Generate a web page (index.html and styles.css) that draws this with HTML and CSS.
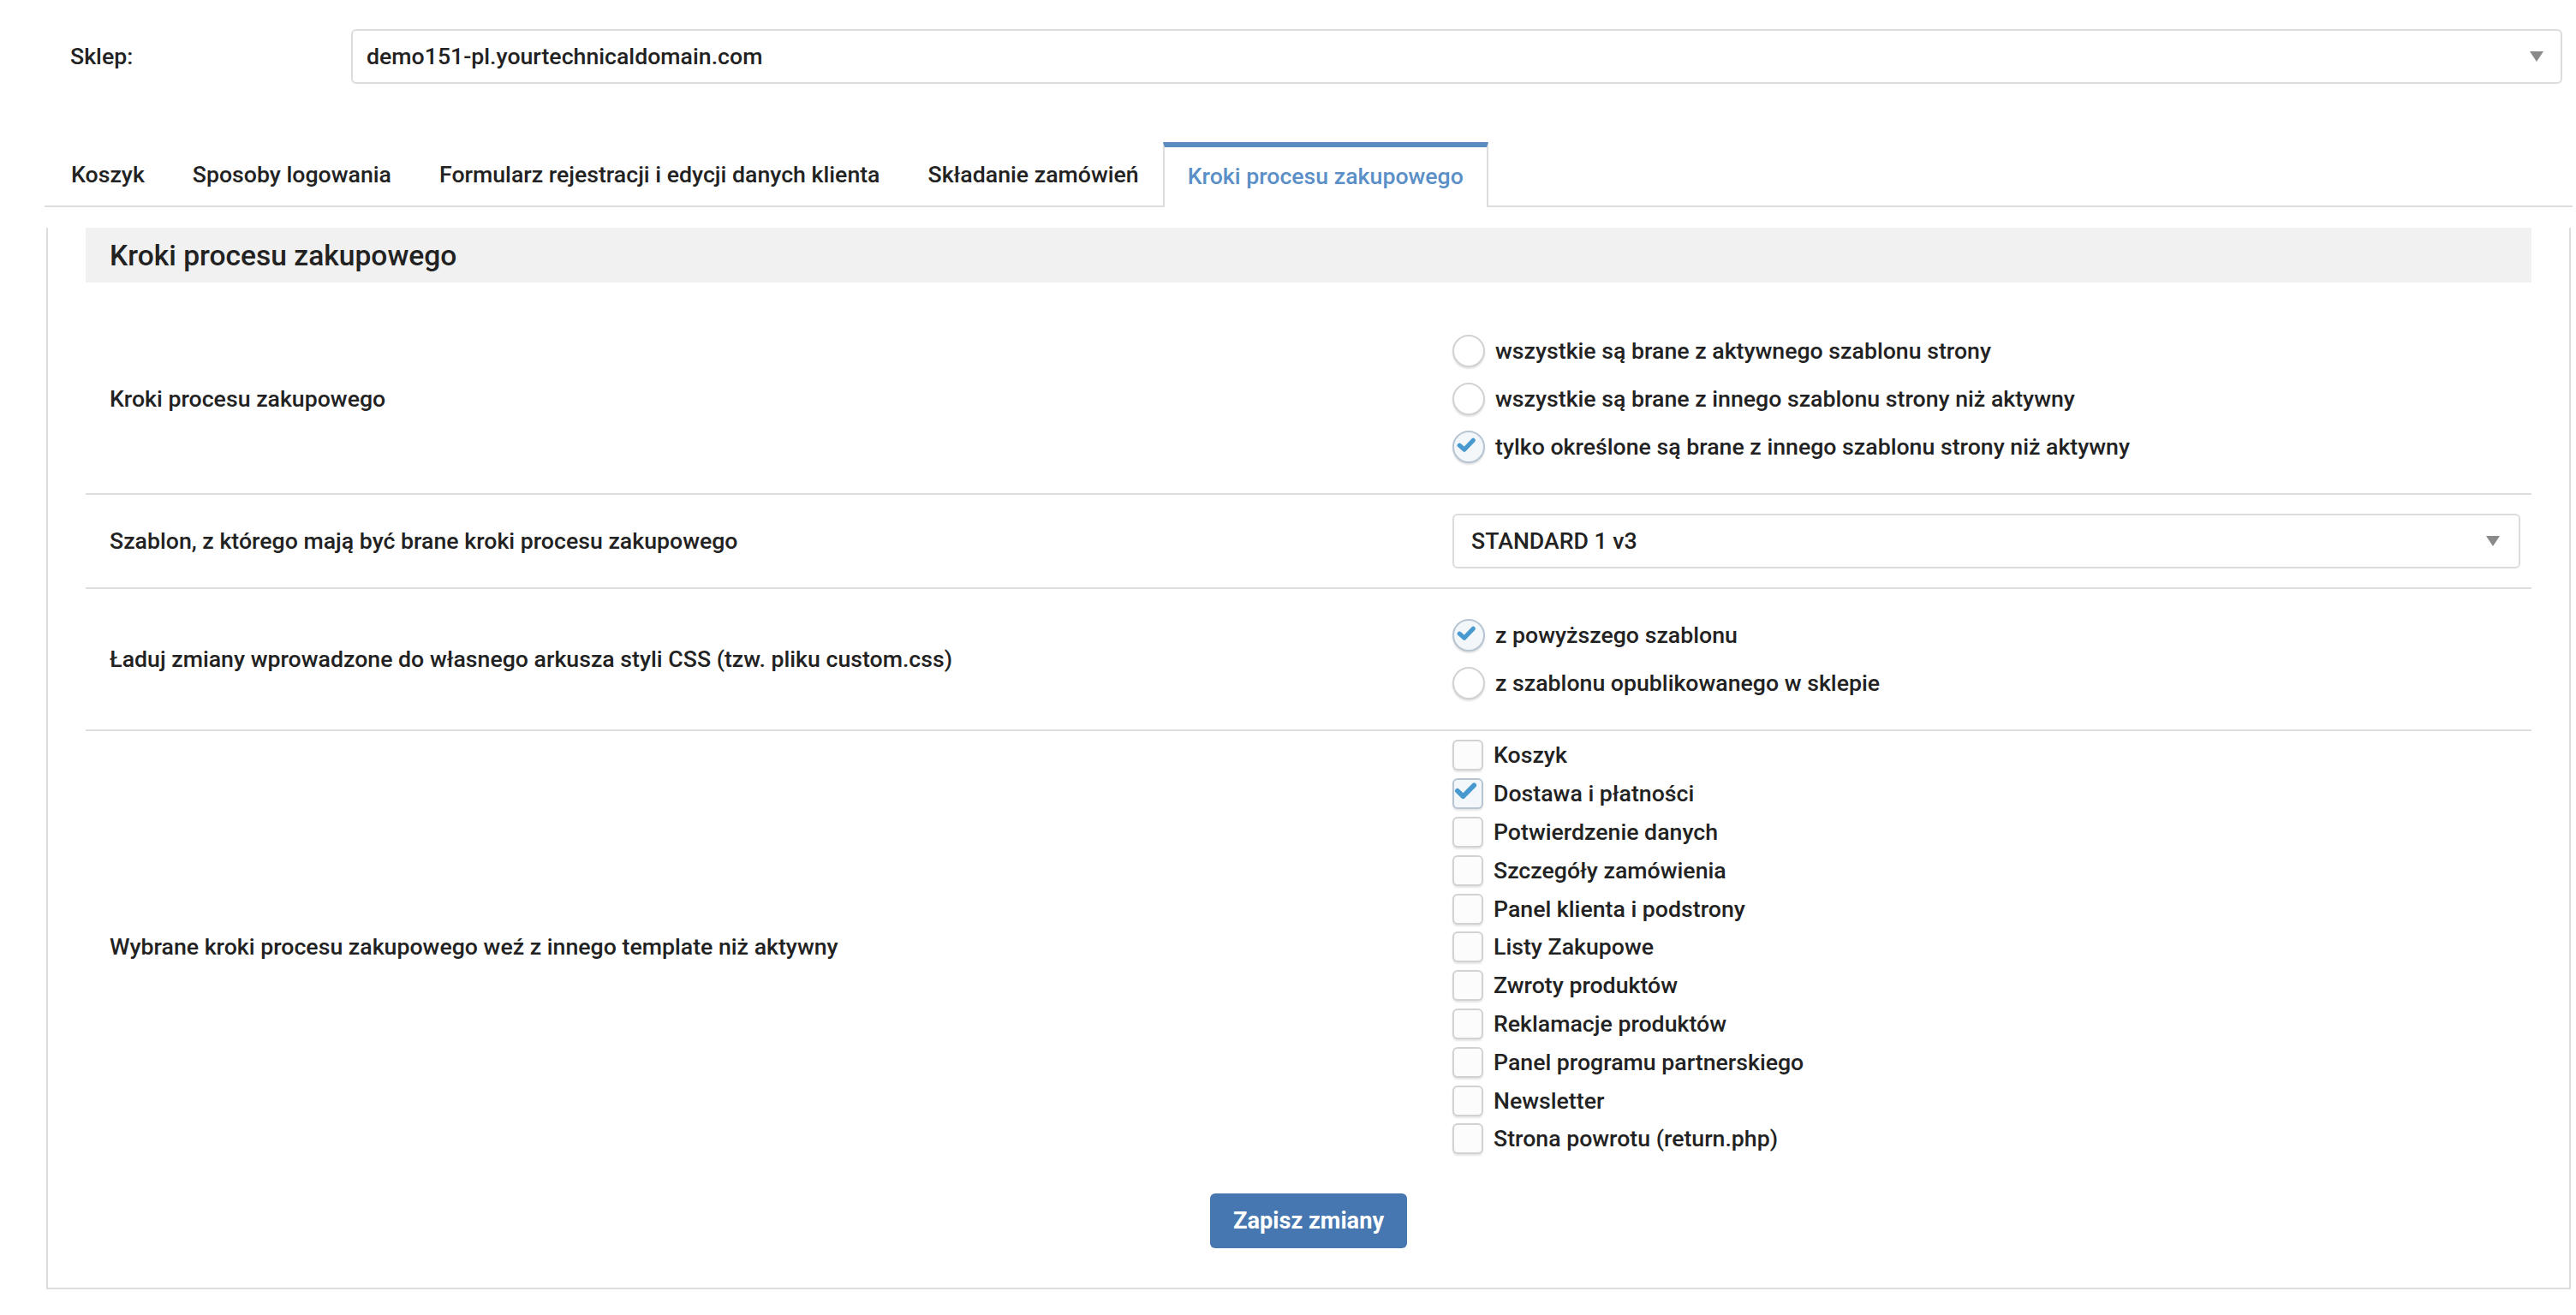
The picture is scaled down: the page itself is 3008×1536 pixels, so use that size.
FILE: index.html
```html
<!DOCTYPE html>
<html lang="pl">
<head>
    <meta charset="UTF-8">
    <meta name="viewport" content="width=device-width, initial-scale=1.0">
    <title>Kroki procesu zakupowego</title>
    <link rel="stylesheet" href="styles.css">
</head>
<body>
    <div class="page">
        <div class="shop-row">
            <label class="shop-label">Sklep:</label>
            <div class="select">
                <span>demo151-pl.yourtechnicaldomain.com</span>
                <i class="caret"></i>
            </div>
        </div>

        <ul class="tabs">
            <li>Koszyk</li>
            <li>Sposoby logowania</li>
            <li>Formularz rejestracji i edycji danych klienta</li>
            <li>Składanie zamówień</li>
            <li class="active">Kroki procesu zakupowego</li>
        </ul>

        <div class="panel">
            <h2 class="panel-title">Kroki procesu zakupowego</h2>

            <div class="row row-options">
                <div class="row-label">Kroki procesu zakupowego</div>
                <div class="row-value">
                    <div class="option"><span class="radio"></span>wszystkie są brane z aktywnego szablonu strony</div>
                    <div class="option"><span class="radio"></span>wszystkie są brane z innego szablonu strony niż aktywny</div>
                    <div class="option"><span class="radio checked"><svg viewBox="0 0 19 19"><path d="M4.6 9.6 L7.7 12.4 L13.6 6.3"/></svg></span>tylko określone są brane z innego szablonu strony niż aktywny</div>
                </div>
            </div>

            <div class="row row-select">
                <div class="row-label">Szablon, z którego mają być brane kroki procesu zakupowego</div>
                <div class="row-value">
                    <div class="select select-small">
                        <span>STANDARD 1 v3</span>
                        <i class="caret"></i>
                    </div>
                </div>
            </div>

            <div class="row row-options">
                <div class="row-label">Ładuj zmiany wprowadzone do własnego arkusza styli CSS (tzw. pliku custom.css)</div>
                <div class="row-value">
                    <div class="option"><span class="radio checked"><svg viewBox="0 0 19 19"><path d="M4.6 9.6 L7.7 12.4 L13.6 6.3"/></svg></span>z powyższego szablonu</div>
                    <div class="option"><span class="radio"></span>z szablonu opublikowanego w sklepie</div>
                </div>
            </div>

            <div class="row row-checks">
                <div class="row-label">Wybrane kroki procesu zakupowego weź z innego template niż aktywny</div>
                <div class="row-value">
                    <div class="check-item"><span class="checkbox"></span>Koszyk</div>
                    <div class="check-item"><span class="checkbox checked"><svg viewBox="0 0 18 18"><path d="M3.3 8.3 L7 11.9 L14.2 4.7"/></svg></span>Dostawa i płatności</div>
                    <div class="check-item"><span class="checkbox"></span>Potwierdzenie danych</div>
                    <div class="check-item"><span class="checkbox"></span>Szczegóły zamówienia</div>
                    <div class="check-item"><span class="checkbox"></span>Panel klienta i podstrony</div>
                    <div class="check-item"><span class="checkbox"></span>Listy Zakupowe</div>
                    <div class="check-item"><span class="checkbox"></span>Zwroty produktów</div>
                    <div class="check-item"><span class="checkbox"></span>Reklamacje produktów</div>
                    <div class="check-item"><span class="checkbox"></span>Panel programu partnerskiego</div>
                    <div class="check-item"><span class="checkbox"></span>Newsletter</div>
                    <div class="check-item"><span class="checkbox"></span>Strona powrotu (return.php)</div>
                </div>
            </div>

            <div class="form-footer">
                <button type="button">Zapisz zmiany</button>
            </div>
        </div>
    </div>
</body>
</html>
```

FILE: styles.css
```css
html {
    zoom: 2;
}
body {
    margin: 0;
    font-family: Roboto, "Liberation Sans", sans-serif;
    font-size: 13.35px;
    font-weight: 500;
    color: #222;
    background: #fff;
}
.page {
    padding: 17px 2px 0 26px;
}
.shop-row {
    display: grid;
    grid-template-columns: 179px 1fr;
    align-items: center;
    margin-right: 6px;
}
.shop-label {
    padding-left: 15px;
}
.select {
    display: flex;
    align-items: center;
    justify-content: space-between;
    height: 32px;
    box-sizing: border-box;
    padding: 0 10px 0 8px;
    border: 1px solid #dcdcdc;
    border-radius: 3px;
    background: #fff;
}
.caret {
    width: 0;
    height: 0;
    border-left: 4px solid transparent;
    border-right: 4px solid transparent;
    border-top: 6px solid #8a8a8a;
}
.tabs {
    display: flex;
    list-style: none;
    margin: 34px 0 0;
    padding: 0 0 0 1.5px;
    border-bottom: 1px solid #ddd;
}
.tabs li {
    height: 37px;
    line-height: 38px;
    padding: 0 14px;
    white-space: nowrap;
}
.tabs li.active {
    box-sizing: border-box;
    height: 38px;
    line-height: 34px;
    margin-bottom: -1px;
    padding: 0 13.5px;
    border: 1px solid #ddd;
    border-top: 3px solid #5b8cbf;
    border-bottom: none;
    background: #fff;
    color: #5b8fc7;
}
.panel {
    margin: 12px 1px 0;
    padding: 0 22px 23px;
    border: 1px solid #ddd;
    border-top: none;
}
.panel-title {
    height: 32px;
    line-height: 33px;
    margin: 0 0 14px;
    padding-left: 14px;
    background: #f1f1f1;
    font-size: 16.8px;
    font-weight: 500;
}
.row {
    display: grid;
    grid-template-columns: 798px 1fr;
    align-items: center;
    border-bottom: 1px solid #ddd;
}
.row-options {
    padding: 12px 0 13px;
}
.row-options + .row-select {
    padding: 11px 0;
}
.row-select + .row-options {
    padding: 13px 0;
}
.row-checks {
    padding: 3px 0 4px;
    border-bottom: none;
}
.row-label {
    padding-left: 14px;
}
.row-value {
    padding-right: 5px;
}
.select-small {
    height: 32px;
    padding: 0 11px 0 10px;
    margin-right: 1.5px;
}
.option {
    display: flex;
    align-items: center;
    height: 28px;
}
.radio,
.checkbox {
    display: inline-block;
    flex: none;
    box-sizing: border-box;
    border: 1px solid #d2d2d2;
    background: #fff;
    box-shadow: 0 1px 1px rgba(0, 0, 0, 0.12);
}
.radio {
    width: 19px;
    height: 19px;
    margin-right: 6px;
    border-radius: 50%;
}
.checkbox {
    width: 18px;
    height: 18px;
    margin-right: 6px;
    border-radius: 3px;
    background: #fcfcfc;
    box-shadow: 0 1px 1px rgba(0, 0, 0, 0.1);
}
.radio.checked,
.checkbox.checked {
    border-color: #b7c5d3;
    background: #f4f7fa;
}
.radio svg,
.checkbox svg {
    display: block;
    width: 100%;
    height: 100%;
    margin: -1px;
    overflow: visible;
}
.radio path,
.checkbox path {
    fill: none;
    stroke: #4799d0;
    stroke-width: 2.9;
    stroke-linecap: round;
    stroke-linejoin: round;
}
.checkbox path {
    stroke-width: 3.2;
}
.check-item {
    display: flex;
    align-items: center;
    height: 22.4px;
}
.form-footer {
    padding-top: 16.5px;
    text-align: center;
}
button {
    height: 32px;
    padding: 0 13.5px;
    border: none;
    border-radius: 3px;
    background: #4677b0;
    color: #fff;
    font-family: Roboto, "Liberation Sans", sans-serif;
    font-size: 13.6px;
    font-weight: 700;
    cursor: pointer;
}
button:hover {
    background: #3b689c;
}
```
